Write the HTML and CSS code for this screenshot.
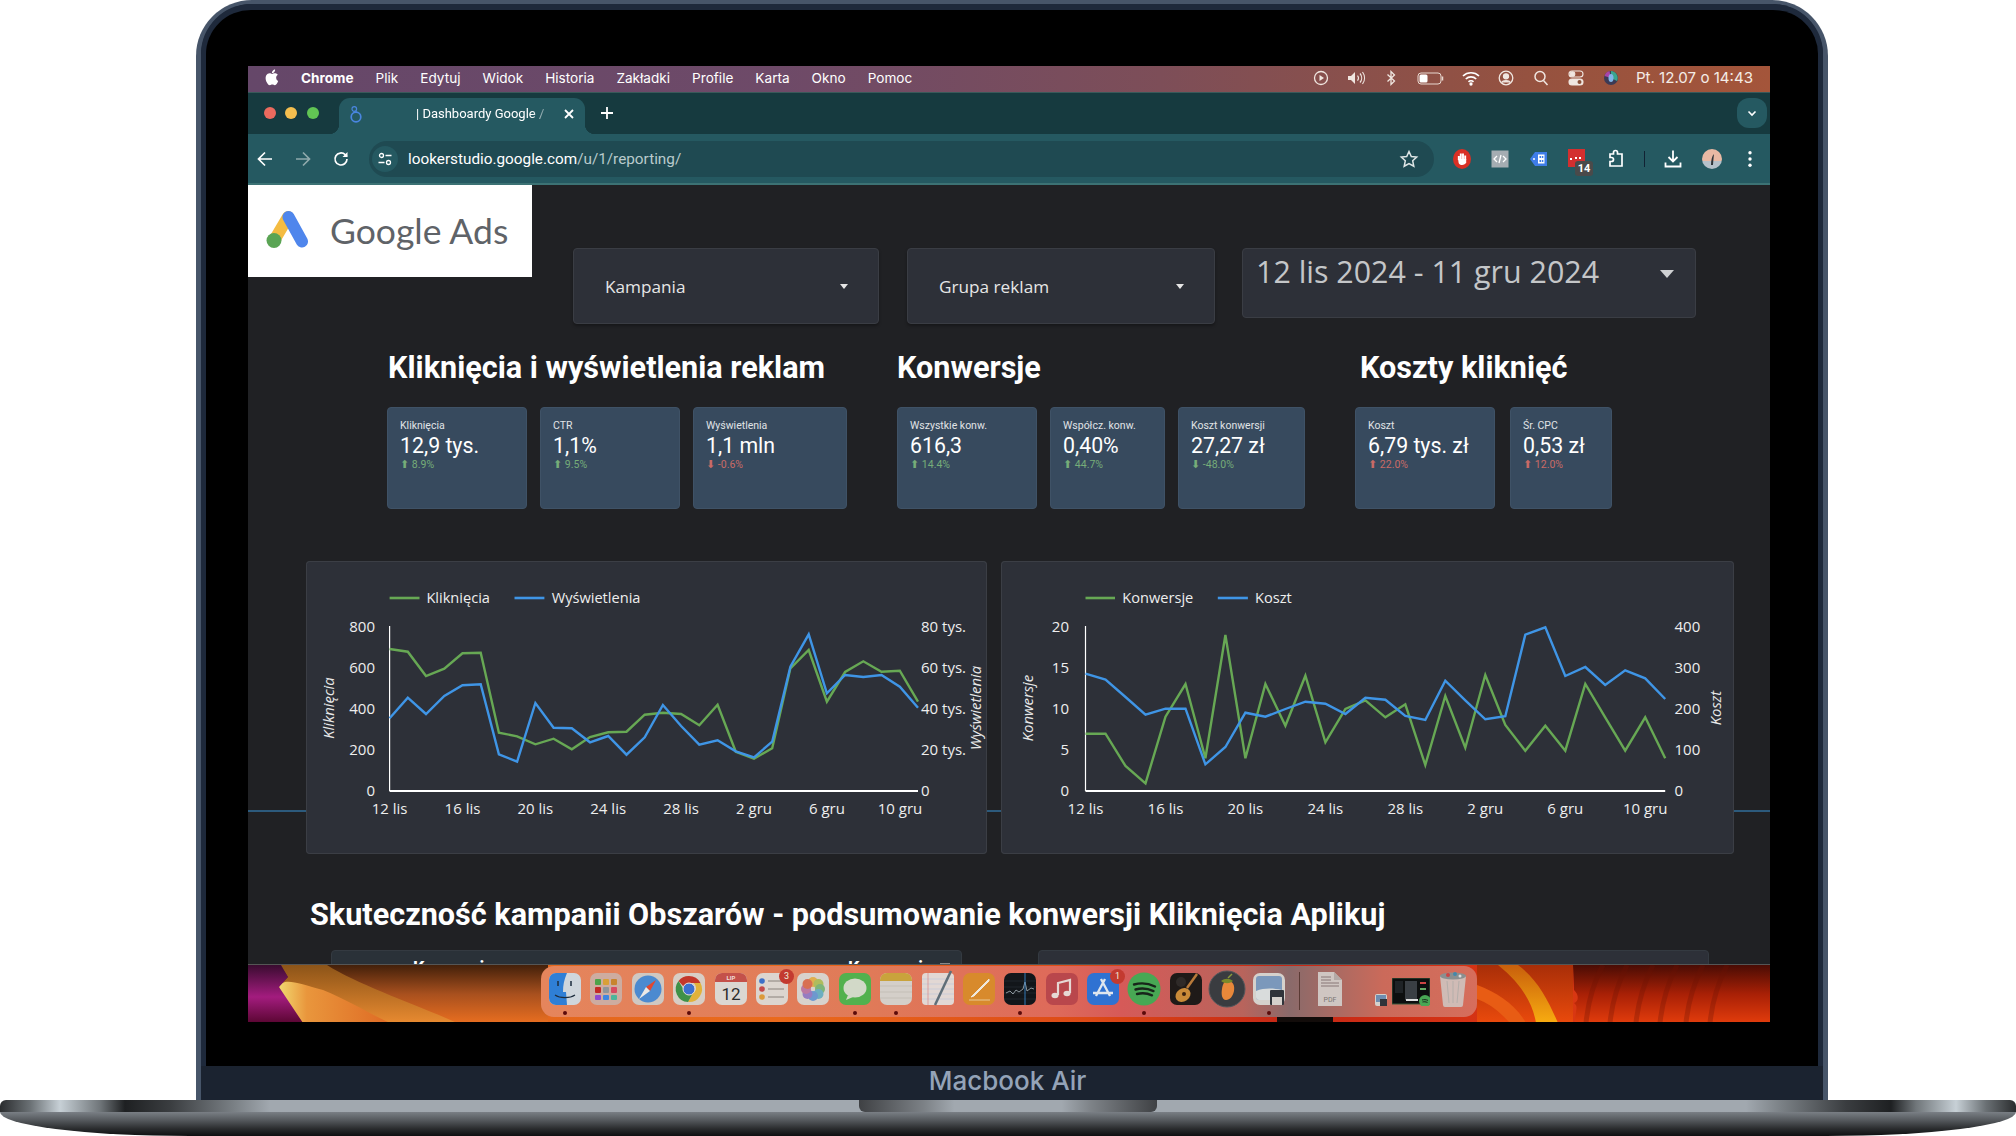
FILE: index.html
```html
<!DOCTYPE html>
<html lang="pl">
<head>
<meta charset="utf-8">
<title>Macbook Air - Dashboardy Google Ads</title>
<link rel="stylesheet" href="styles.css">
</head>
<body>
<div class="laptop">
  <div class="lid">
    <div class="bezel">
      <div class="screen">
        <div class="menubar">
          <svg class="apple" viewBox="0 0 16 18" width="16" height="18"><path fill="#fff" d="M12.2 9.600c0-1.900 1.600-2.800 1.600-2.800-.9-1.300-2.300-1.500-2.800-1.500-1.200-.1-2.300.7-2.900.7s-1.500-.7-2.500-.7C4.300 5.300 3 6.100 2.300 7.300c-1.400 2.400-.4 6 1 7.900.7 1 1.500 2 2.500 2s1.400-.6 2.500-.6 1.500.6 2.500.6 1.700-.9 2.300-1.900c.7-1.100 1-2.200 1-2.200s-2-.8-2-3.500zM10.300 4c.5-.6.9-1.500.8-2.400-.8 0-1.700.5-2.300 1.200-.5.6-1 1.500-.8 2.300.9.100 1.800-.4 2.300-1.100z"/></svg>
          <b class="menu-app">Chrome</b>
          <span>Plik</span><span>Edytuj</span><span>Widok</span><span>Historia</span><span>Zakładki</span><span>Profile</span><span>Karta</span><span>Okno</span><span>Pomoc</span>
          <div class="status">
            <svg viewBox="0 0 20 20" width="20" height="20" fill="none" stroke="#f0e6e0" stroke-width="1.300"><circle cx="10" cy="10" r="6.500"/><path d="M8.500 7v6l4.500-3z" fill="#f0e6e0" stroke="none"/></svg>
            <svg viewBox="0 0 20 20" width="20" height="20" fill="none" stroke="#f0e6e0" stroke-width="1.200"><path d="M2 8h3l4-4v12l-4-4H2z" fill="#f0e6e0" stroke="none"/><path d="M11.500 7.500a4 4 0 0 1 0 5M14 5.500a7 7 0 0 1 0 9M16.500 4a10 10 0 0 1 0 12"/></svg>
            <svg viewBox="0 0 20 20" width="20" height="20" fill="none" stroke="#f0e6e0" stroke-width="1.300"><path d="M6.500 6.500l7 6.500-3.500 3.500V3.500L13.500 7l-7 6.500"/></svg>
            <svg viewBox="0 0 30 20" width="30" height="20" fill="none"><rect x="2" y="5" width="23" height="11" rx="3" stroke="#e8d8d0" stroke-width="1"/><rect x="3.500" y="6.500" width="8" height="8" rx="1.500" fill="#fff"/><path d="M26.500 8.500v4" stroke="#e8d8d0" stroke-width="1.500"/></svg>
            <svg viewBox="0 0 20 20" width="20" height="20" fill="none" stroke="#fff" stroke-width="1.700"><path d="M2 8a11.500 11.500 0 0 1 16 0M4.800 11a7.500 7.500 0 0 1 10.400 0M7.500 13.800a3.500 3.500 0 0 1 5 0"/><circle cx="10" cy="16" r=".8" fill="#fff"/></svg>
            <svg viewBox="0 0 20 20" width="20" height="20" fill="none" stroke="#f0e6e0" stroke-width="1.300"><circle cx="10" cy="10" r="6.800"/><circle cx="10" cy="8.300" r="2.500" fill="#f0e6e0"/><path d="M5.500 14.500c1.500-2.500 7.500-2.500 9 0" fill="#f0e6e0"/></svg>
            <svg viewBox="0 0 20 20" width="20" height="20" fill="none" stroke="#f0e6e0" stroke-width="1.500"><circle cx="9" cy="8.500" r="5"/><path d="M12.500 12.500l4 4.500"/></svg>
            <svg viewBox="0 0 20 20" width="20" height="20" fill="none" stroke="#f0e6e0" stroke-width="1.100"><rect x="3" y="3" width="14" height="6" rx="3"/><circle cx="6.500" cy="6" r="2.300" fill="#f0e6e0"/><rect x="3" y="11" width="14" height="6" rx="3" fill="#f0e6e0"/><circle cx="13.500" cy="14" r="2" fill="#8a5038" stroke="none"/></svg>
            <svg viewBox="0 0 20 20" width="20" height="20"><circle cx="10" cy="10" r="7" fill="#3c3a55"/><path d="M10 3a7 7 0 0 1 6 10l-6-3z" fill="#3aa58e"/><path d="M3.500 8a7 7 0 0 1 5-5L10 10z" fill="#a844a8"/><ellipse cx="10" cy="10" rx="2.500" ry="4" fill="#7fb4e8"/></svg>
            <span class="clock">Pt. 12.07 o 14:43</span>
          </div>
        </div>

        <div class="tabstrip">
          <div class="lights"><i class="light red"></i><i class="light amber"></i><i class="light green"></i></div>
          <div class="tab">
            <svg class="favicon" viewBox="0 0 12 20" width="12" height="20" fill="none" stroke="#4a86e0" stroke-width="1.700"><circle cx="6" cy="13" r="4.800"/><circle cx="4.300" cy="5" r="2.300" stroke-width="1.200"/><path d="M5.500 7.500l1 1"/></svg>
            <span class="tab-title">| Dashboardy Google /</span>
            <svg class="tab-close" viewBox="0 0 12 12" width="12" height="12" stroke="#fff" stroke-width="1.800"><path d="M2 2l8 8M10 2l-8 8"/></svg>
          </div>
          <svg class="new-tab" viewBox="0 0 14 14" width="14" height="14" stroke="#fff" stroke-width="1.800"><path d="M7 1v12M1 7h12"/></svg>
          <div class="tab-search"><svg viewBox="0 0 12 12" width="12" height="12" fill="none" stroke="#fff" stroke-width="1.600"><path d="M2.500 4.500L6 8l3.500-3.500"/></svg></div>
        </div>

        <div class="toolbar">
          <svg viewBox="0 0 20 20" width="20" height="20" fill="none" stroke="#fff" stroke-width="1.700"><path d="M17 10H4M10 3.500L3.500 10l6.500 6.500"/></svg>
          <svg viewBox="0 0 20 20" width="20" height="20" fill="none" stroke="#8fa9ac" stroke-width="1.700"><path d="M3 10h13M10 3.500l6.500 6.500-6.500 6.500"/></svg>
          <svg viewBox="0 0 20 20" width="20" height="20" fill="none" stroke="#fff" stroke-width="1.700"><path d="M16 10a6 6 0 1 1-1.800-4.300L16 7.500"/><path d="M16.500 3v5h-5" fill="#fff" stroke="none"/></svg>
          <div class="omnibox">
            <span class="site-chip"><svg viewBox="0 0 16 16" width="16" height="16" fill="none" stroke="#fff" stroke-width="1.300"><circle cx="4.500" cy="4.500" r="2"/><path d="M8.500 4.500h6M1.500 11.500h6"/><circle cx="11.500" cy="11.500" r="2"/></svg></span>
            <span class="url">lookerstudio.google.com<em>/u/1/reporting/</em></span>
            <svg class="star" viewBox="0 0 20 20" width="20" height="20" fill="none" stroke="#dfe6e6" stroke-width="1.500"><path d="M10 2.500l2.300 5 5.400.6-4 3.700 1.100 5.400-4.800-2.700-4.800 2.700 1.100-5.400-4-3.700 5.400-.6z"/></svg>
          </div>
          <div class="extensions">
            <svg viewBox="0 0 20 20" width="20" height="20"><ellipse cx="10" cy="10" rx="9" ry="10" fill="#d93025"/><path d="M6.800 11V7M8.800 10V4.500M11 10V4.500M13.200 11V6.500" stroke="#fff" stroke-width="1.900"/><path d="M6 10h8.200v3.500c-1 3-6.500 3.500-7.500.5z" fill="#fff"/></svg>
            <svg viewBox="0 0 20 20" width="20" height="20"><rect x="1.500" y="1.500" width="17" height="17" fill="#a5adb2"/><path d="M7 7l-3 3 3 3M13 7l3 3-3 3M11 6l-2 8" stroke="#fff" stroke-width="1.300" fill="none"/></svg>
            <svg viewBox="0 0 20 20" width="20" height="20"><path d="M6 3h12v14H6L1 10z" fill="#3f7de8"/><rect x="9" y="5.500" width="6.500" height="9" fill="#fff"/><rect x="10.500" y="7" width="1.500" height="2" fill="#3f7de8"/><rect x="12.800" y="7" width="1.500" height="2" fill="#3f7de8"/><rect x="10.500" y="11" width="1.500" height="2" fill="#3f7de8"/><rect x="12.800" y="11" width="1.500" height="2" fill="#3f7de8"/><circle cx="5" cy="10" r="1" fill="#fff"/></svg>
            <div class="ext-badged"><svg viewBox="0 0 20 20" width="20" height="20"><rect x="1" y="0" width="17" height="18" fill="#d32f2f"/><path d="M3 10h2M8 9h2M12 9h2" stroke="#fff" stroke-width="2"/></svg><span class="ext-badge">14</span></div>
            <svg viewBox="0 0 20 20" width="20" height="20" fill="none" stroke="#fff" stroke-width="1.700"><path d="M4 5h3.500V3.500a2 2 0 0 1 4 0V5H16v12H4v-4.500h1.500a2 2 0 0 0 0-4H4z"/></svg>
            <i class="tool-sep"></i>
            <svg viewBox="0 0 20 20" width="20" height="20" fill="none" stroke="#fff" stroke-width="1.800"><path d="M10 1.500v11M5.500 8l4.500 4.500L14.500 8M2.500 13.500v4h15v-4"/></svg>
            <svg viewBox="0 0 20 20" width="20" height="20"><clipPath id="av"><circle cx="10" cy="10" r="10"/></clipPath><g clip-path="url(#av)"><rect width="20" height="12" fill="#e9b9a4"/><rect y="12" width="20" height="8" fill="#b5c1ca"/><path d="M9 16c0-5 1-9 3-11-.5 4-.8 8-1 11z" fill="#2e3338"/></g></svg>
            <svg viewBox="0 0 20 20" width="20" height="20" fill="#fff"><circle cx="10" cy="3.800" r="1.700"/><circle cx="10" cy="10" r="1.700"/><circle cx="10" cy="16.200" r="1.700"/></svg>
          </div>
        </div>

        <div class="page">
          <div class="controls">
            <div class="logo">
              <svg class="logo-mark" viewBox="0 0 44 38" width="44" height="38"><path d="M22 7L9 29" stroke="#f4bc42" stroke-width="12" stroke-linecap="round"/><path d="M22.500 7L36 31.500" stroke="#4f86ec" stroke-width="12" stroke-linecap="round"/><circle cx="8" cy="30.500" r="7.500" fill="#5aa454"/></svg>
              <span class="logo-text">Google Ads</span>
            </div>
            <div class="filter filter-campaign"><span>Kampania</span><i class="caret"></i></div>
            <div class="filter filter-group"><span>Grupa reklam</span><i class="caret"></i></div>
            <div class="date-filter"><span>12 lis 2024 - 11 gru 2024</span><i class="caret-big"></i></div>
          </div>

          <div class="groups">
            <section class="group">
              <h2 class="group-title title-a">Kliknięcia i wyświetlenia reklam</h2>
              <div class="kpis">
                <div class="kpi w140"><p class="kpi-label">Kliknięcia</p><p class="kpi-value">12,9 tys.</p><p class="kpi-delta good"><b>⬆</b> 8.9%</p></div>
                <div class="kpi w140"><p class="kpi-label">CTR</p><p class="kpi-value">1,1%</p><p class="kpi-delta good"><b>⬆</b> 9.5%</p></div>
                <div class="kpi w154"><p class="kpi-label">Wyświetlenia</p><p class="kpi-value">1,1 mln</p><p class="kpi-delta bad"><b>⬇</b> -0.6%</p></div>
              </div>
            </section>
            <section class="group">
              <h2 class="group-title">Konwersje</h2>
              <div class="kpis">
                <div class="kpi w140"><p class="kpi-label">Wszystkie konw.</p><p class="kpi-value">616,3</p><p class="kpi-delta good"><b>⬆</b> 14.4%</p></div>
                <div class="kpi w115"><p class="kpi-label">Współcz. konw.</p><p class="kpi-value">0,40%</p><p class="kpi-delta good"><b>⬆</b> 44.7%</p></div>
                <div class="kpi w127"><p class="kpi-label">Koszt konwersji</p><p class="kpi-value">27,27 zł</p><p class="kpi-delta good"><b>⬇</b> -48.0%</p></div>
              </div>
            </section>
            <section class="group">
              <h2 class="group-title title-c">Koszty kliknięć</h2>
              <div class="kpis kpis-wide">
                <div class="kpi w140"><p class="kpi-label">Koszt</p><p class="kpi-value">6,79 tys. zł</p><p class="kpi-delta bad"><b>⬆</b> 22.0%</p></div>
                <div class="kpi w102"><p class="kpi-label">Śr. CPC</p><p class="kpi-value">0,53 zł</p><p class="kpi-delta bad"><b>⬆</b> 12.0%</p></div>
              </div>
            </section>
          </div>

          <div class="charts">
            <div class="chart chart-a">
              <svg viewBox="0 0 681 293" width="681" height="293">
                <line class="legend-g" x1="83.600" y1="37" x2="113.500" y2="37"/><text class="legend" x="120.400" y="42">Kliknięcia</text>
                <line class="legend-b" x1="208.500" y1="37" x2="238.400" y2="37"/><text class="legend" x="245.700" y="42">Wyświetlenia</text>
                <path class="axis" d="M83.600 65V230"/><path class="axis-x" d="M83.600 230H612"/>
                <g class="tick end"><text x="69" y="71">800</text><text x="69" y="112">600</text><text x="69" y="153">400</text><text x="69" y="194">200</text><text x="69" y="235">0</text></g>
                <g class="tick"><text x="615" y="71">80 tys.</text><text x="615" y="112">60 tys.</text><text x="615" y="153">40 tys.</text><text x="615" y="194">20 tys.</text><text x="615" y="235">0</text></g>
                <g class="tick mid"><text x="83.600" y="253">12 lis</text><text x="156.500" y="253">16 lis</text><text x="229.400" y="253">20 lis</text><text x="302.200" y="253">24 lis</text><text x="375.100" y="253">28 lis</text><text x="448" y="253">2 gru</text><text x="520.900" y="253">6 gru</text><text x="594" y="253">10 gru</text></g>
                <text class="axis-title" transform="translate(28 147) rotate(-90)">Kliknięcia</text>
                <text class="axis-title" transform="translate(675 147) rotate(-90)">Wyświetlenia</text>
                <polyline class="line-g" points="83.600,88 101.800,90.700 120,115 138.300,107.700 156.500,92.300 174.700,91.700 192.900,171.700 211.100,175.300 229.400,183.300 247.600,177.700 265.800,188.300 284,176 302.200,171.300 320.500,170.700 338.700,153.700 356.900,151.700 375.100,153 393.300,164.300 411.600,143.700 429.800,190.700 448,197.700 466.200,187.300 484.400,107.300 502.700,89 520.900,140.700 539.100,111 557.300,100.300 575.500,110.700 593.800,109.700 612,140.700"/>
                <polyline class="line-b" points="83.600,157.300 101.800,136.700 120,153 138.300,135 156.500,124.300 174.700,123.300 192.900,193.300 211.100,200.700 229.400,142 247.600,166.700 265.800,167.300 284,181.300 302.200,175 320.500,193.700 338.700,176.300 356.900,144 375.100,165 393.300,183.700 411.600,179.300 429.800,190.300 448,196.300 466.200,180.700 484.400,105.700 502.700,73.300 520.900,132.300 539.100,114 557.300,116 575.500,114 593.800,125.700 612,146.700"/>
              </svg>
            </div>
            <div class="chart chart-b">
              <svg viewBox="0 0 733 293" width="733" height="293">
                <line class="legend-g" x1="84.500" y1="37" x2="114" y2="37"/><text class="legend" x="121.300" y="42">Konwersje</text>
                <line class="legend-b" x1="216.800" y1="37" x2="246.900" y2="37"/><text class="legend" x="254" y="42">Koszt</text>
                <path class="axis" d="M84.500 65V230"/><path class="axis-x" d="M84.500 230H664.200"/>
                <g class="tick end"><text x="68" y="71">20</text><text x="68" y="112">15</text><text x="68" y="153">10</text><text x="68" y="194">5</text><text x="68" y="235">0</text></g>
                <g class="tick"><text x="673.500" y="71">400</text><text x="673.500" y="112">300</text><text x="673.500" y="153">200</text><text x="673.500" y="194">100</text><text x="673.500" y="235">0</text></g>
                <g class="tick mid"><text x="84.500" y="253">12 lis</text><text x="164.500" y="253">16 lis</text><text x="244.400" y="253">20 lis</text><text x="324.400" y="253">24 lis</text><text x="404.300" y="253">28 lis</text><text x="484.300" y="253">2 gru</text><text x="564.300" y="253">6 gru</text><text x="644.200" y="253">10 gru</text></g>
                <text class="axis-title" transform="translate(32 147) rotate(-90)">Konwersje</text>
                <text class="axis-title" transform="translate(720 147) rotate(-90)">Koszt</text>
                <polyline class="line-g" points="84.500,172.700 104.500,172.700 124.500,205 144.500,222.300 164.500,155.700 184.500,123 204.400,197.300 224.400,74 244.400,197.300 264.400,123 284.400,164.700 304.400,114.700 324.400,181.300 344.400,148 364.400,139.300 384.400,156.300 404.300,143.300 424.300,204 444.300,135 464.300,186.700 484.300,114 504.300,164 524.300,189.700 544.300,164.700 564.300,189.700 584.300,123 604.200,156.300 624.200,189.700 644.200,156.300 664.200,197.300"/>
                <polyline class="line-b" points="84.500,112.700 104.500,118.700 124.500,136 144.500,153.700 164.500,147.700 184.500,147.700 204.400,203.300 224.400,186 244.400,151.700 264.400,155.700 284.400,148 304.400,140.700 324.400,142.700 344.400,153 364.400,136.700 384.400,138.700 404.300,155 424.300,159 444.300,119.700 464.300,139.300 484.300,158.300 504.300,155.300 524.300,73.700 544.300,66.300 564.300,115 584.300,106 604.200,124 624.200,109.300 644.200,117.300 664.200,138"/>
              </svg>
            </div>
          </div>

          <h2 class="section-title">Skuteczność kampanii Obszarów - podsumowanie konwersji Kliknięcia Aplikuj</h2>

          <div class="tables">
            <div class="table table-a"><span class="th th-name">Kampania</span><span class="th th-conv">Konwersje</span><i class="sort"></i></div>
            <div class="table table-b"></div>
          </div>
        </div>

        <div class="desktop">
          <svg class="wallpaper" viewBox="0 0 1522 58" width="1522" height="58" preserveAspectRatio="none">
            <defs>
              <linearGradient id="wpBase" x1="0" x2="1" y1="0" y2="0"><stop offset="0" stop-color="#dc641e"/><stop offset=".35" stop-color="#ea6a1c"/><stop offset=".55" stop-color="#dd4a16"/><stop offset=".68" stop-color="#c62816"/><stop offset=".8" stop-color="#d43214"/><stop offset="1" stop-color="#e0400f"/></linearGradient>
              <linearGradient id="wpMag" x1="0" x2="0" y1="0" y2="1"><stop offset="0" stop-color="#3a0c30"/><stop offset=".55" stop-color="#a31c7e"/><stop offset="1" stop-color="#5a0632"/></linearGradient>
              <linearGradient id="wpDark" x1="0" x2="0" y1="0" y2="1"><stop offset="0" stop-color="#43200a"/><stop offset=".5" stop-color="#a8501e"/><stop offset="1" stop-color="#e86e20"/></linearGradient>
              <linearGradient id="wpBand" x1="0" x2="0" y1="0" y2="1"><stop offset="0" stop-color="#8c5418"/><stop offset="1" stop-color="#e88a30"/></linearGradient>
              <linearGradient id="wpBlob" x1="0" x2="1" y1="0" y2="0"><stop offset="0" stop-color="#f2d870"/><stop offset=".25" stop-color="#e9963c"/><stop offset="1" stop-color="#df6a24"/></linearGradient>
              <linearGradient id="wpRayA" x1="0" x2="0" y1="0" y2="1"><stop offset="0" stop-color="#a82e08"/><stop offset="1" stop-color="#ea4a0c"/></linearGradient>
              <linearGradient id="wpRayY" x1="0" x2="0" y1="0" y2="1"><stop offset="0" stop-color="#c85f0c"/><stop offset="1" stop-color="#f8ac10"/></linearGradient>
              <linearGradient id="wpEdge" x1="0" x2="0" y1="0" y2="1"><stop offset="0" stop-color="#4a0c04"/><stop offset=".5" stop-color="#a82006"/><stop offset="1" stop-color="#e23c0c"/></linearGradient>
            </defs>
            <rect width="1522" height="58" fill="url(#wpBase)"/>
            <rect x="32" width="268" height="58" fill="url(#wpDark)"/>
            <path d="M32 0H79C110 20 170 40 209 58H55L31 22 40 12z" fill="url(#wpBand)"/>
            <path d="M31 22C35 12 50 18 75 25 100 35 120 48 142 58H55C45 45 32 32 31 22z" fill="url(#wpBlob)"/>
            <path d="M0 0H33L40 12 31 22 55 58H0z" fill="url(#wpMag)"/>
            <path d="M1029 46H1085V58H1029z" fill="#120c0a"/>
            <rect x="1229" width="96" height="58" fill="url(#wpRayA)"/>
            <path d="M1229 20C1250 28 1268 40 1278 58H1262C1250 45 1240 38 1229 34z" fill="#e85c14"/>
            <path d="M1250 0C1275 20 1285 40 1288 58H1310C1300 35 1290 15 1270 0z" fill="url(#wpRayY)"/>
            <path d="M1325 0H1522V58H1327C1327 45 1331 42 1326 38 1331 36 1331 30 1326 25z" fill="url(#wpEdge)"/>
            <g fill="none" stroke="#6a1204" stroke-width="5" opacity=".3">
              <path d="M1355 0C1345 18 1340 38 1338 58"/><path d="M1379 0C1370 18 1364 38 1362 58"/><path d="M1405 0C1396 18 1390 38 1388 58"/><path d="M1429 0C1420 18 1414 38 1412 58"/><path d="M1455 0C1446 18 1440 38 1438 58"/><path d="M1479 0C1470 18 1464 38 1462 58"/>
            </g>
          </svg>
          <div class="dock">
            <div class="dock-apps">
              <div class="app run"><svg viewBox="0 0 32 32" width="32" height="32"><rect width="32" height="32" rx="7" fill="#cfd6dc"/><path d="M7 0h11c-3 7-4 12-4 19h3l1 13H7a7 7 0 0 1-7-7V7a7 7 0 0 1 7-7z" fill="#2f7fd6"/><path d="M9 8v5M22 8v5" stroke="#1d2c3c" stroke-width="1.500"/><path d="M6 22c5 3.500 15 3.500 20 0" stroke="#1d2c3c" stroke-width="1.200" fill="none"/></svg></div>
              <div class="app"><svg viewBox="0 0 32 32" width="32" height="32"><rect width="32" height="32" rx="7" fill="#cdaca0"/><rect x="5" y="6" width="6" height="6" rx="1" fill="#4ea34a"/><rect x="13" y="6" width="6" height="6" rx="1" fill="#d9a038"/><rect x="21" y="6" width="6" height="6" rx="1" fill="#c8842e"/><rect x="5" y="14" width="6" height="6" rx="1" fill="#c22a26"/><rect x="13" y="14" width="6" height="6" rx="1" fill="#8f9599"/><rect x="21" y="14" width="6" height="6" rx="1" fill="#d84a60"/><rect x="5" y="22" width="6" height="5" rx="1" fill="#8f4ad0"/><rect x="13" y="22" width="6" height="5" rx="1" fill="#3d86e0"/><rect x="21" y="22" width="6" height="5" rx="1" fill="#4cb59a"/></svg></div>
              <div class="app"><svg viewBox="0 0 32 32" width="32" height="32"><rect width="32" height="32" rx="7" fill="#cfc8c2"/><circle cx="16" cy="16" r="13.500" fill="#4b8ad0"/><path d="M24 7L14 14l4 4z" fill="#e2472f"/><path d="M7 26l7-12 4 4z" fill="#eceae6"/></svg></div>
              <div class="app run"><svg viewBox="0 0 32 32" width="32" height="32"><rect width="32" height="32" rx="7" fill="#d8cec5"/><path d="M16 3a13 13 0 0 1 11.500 7H16a6 6 0 0 0-5.500 3.500L5.500 8A13 13 0 0 1 16 3z" fill="#c4372a"/><path d="M27.500 10A13 13 0 0 1 15 29l5-9a6 6 0 0 0 .5-10z" fill="#e2b23a"/><path d="M5.500 8l5.500 9a6 6 0 0 0 9 3l-5 9A13 13 0 0 1 5.500 8z" fill="#3f9148"/><circle cx="16" cy="16" r="6" fill="#3d70d0" stroke="#e8e0d8" stroke-width="1"/></svg></div>
              <div class="app"><svg viewBox="0 0 32 32" width="32" height="32"><rect width="32" height="32" rx="7" fill="#dbd7d2"/><path d="M0 9V7a7 7 0 0 1 7-7h18a7 7 0 0 1 7 7v2z" fill="#c4514a"/><text class="cal-month" x="16" y="7.200">LIP</text><text class="cal-day" x="16" y="27">12</text></svg></div>
              <div class="app"><svg viewBox="0 0 32 32" width="32" height="32"><rect width="32" height="32" rx="7" fill="#dcd5cf"/><circle cx="6" cy="8" r="2.800" fill="#3d70c8"/><circle cx="6" cy="16" r="2.800" fill="#c44a4a"/><circle cx="6" cy="24" r="2.800" fill="#dc9a3a"/><path d="M12 8h16M12 16h16M12 24h16" stroke="#8a827c" stroke-width="1"/></svg><span class="badge">3</span></div>
              <div class="app"><svg viewBox="0 0 32 32" width="32" height="32"><rect width="32" height="32" rx="7" fill="#d8d2cc"/><g opacity=".85"><circle cx="16" cy="9" r="5" fill="#e2a83a"/><circle cx="21.500" cy="11" r="5" fill="#a8b94a"/><circle cx="23" cy="16" r="5" fill="#6fb06a"/><circle cx="21.500" cy="21" r="5" fill="#5aa8c0"/><circle cx="16" cy="23" r="5" fill="#5b8ed0"/><circle cx="10.500" cy="21" r="5" fill="#8b6ec0"/><circle cx="9" cy="16" r="5" fill="#b86a9c"/><circle cx="10.500" cy="11" r="5" fill="#d8603e"/></g></svg></div>
              <div class="app run"><svg viewBox="0 0 32 32" width="32" height="32"><rect width="32" height="32" rx="7" fill="#52b14e"/><ellipse cx="16" cy="15" rx="11.500" ry="9.500" fill="#d2d9c8"/><path d="M9 22l-2 5 7-3z" fill="#d2d9c8"/></svg></div>
              <div class="app run"><svg viewBox="0 0 32 32" width="32" height="32"><rect width="32" height="32" rx="7" fill="#d4cfc9"/><path d="M0 8V7a7 7 0 0 1 7-7h18a7 7 0 0 1 7 7v1z" fill="#c9a33c"/><path d="M0 13h32M0 19h32M0 25h32" stroke="#bdb7b0" stroke-width=".7"/></svg></div>
              <div class="app"><svg viewBox="0 0 32 32" width="32" height="32"><rect width="32" height="32" rx="4" fill="#e2d8d4"/><path d="M0 6h32M0 11h32M0 16h32M0 21h32M0 26h32" stroke="#c0c8d8" stroke-width=".7"/><path d="M6 0v32" stroke="#d87a7a" stroke-width=".6"/><path d="M29-2L13 32" stroke="#5f6e78" stroke-width="2.500"/></svg></div>
              <div class="app"><svg viewBox="0 0 32 32" width="32" height="32"><rect width="32" height="32" rx="7" fill="#d88a2c"/><path d="M26 6L11 21l-3 3 3-1 15-15z" fill="#efe8dc" stroke="#efe8dc"/><path d="M6 27h21" stroke="#efd8b0" stroke-width=".8"/></svg></div>
              <div class="app run"><svg viewBox="0 0 32 32" width="32" height="32"><rect width="32" height="32" rx="7" fill="#12161a"/><path d="M0 8h32M0 14h32M0 20h32M0 26h32" stroke="#2a3138" stroke-width=".6"/><path d="M2 20l4-2 3 3 3-4 3 2 4-3 2-7 2 9 4-3 3 1" fill="none" stroke="#9aa5ac" stroke-width=".9"/><path d="M21 0v32" stroke="#3584c8" stroke-width=".9"/></svg></div>
              <div class="app"><svg viewBox="0 0 32 32" width="32" height="32"><rect width="32" height="32" rx="7" fill="#b9474c"/><path d="M12 22V10l12-3v13" fill="none" stroke="#e6d8d4" stroke-width="2.200"/><ellipse cx="9" cy="22.500" rx="3.500" ry="2.800" fill="#e6d8d4"/><ellipse cx="21" cy="20.500" rx="3.500" ry="2.800" fill="#e6d8d4"/></svg></div>
              <div class="app"><svg viewBox="0 0 32 32" width="32" height="32"><rect width="32" height="32" rx="7" fill="#2f72d2"/><path d="M18 6L9 23M14 6l9 17M6 20h20" stroke="#dfe6ee" stroke-width="2.300" fill="none"/></svg><span class="badge">1</span></div>
              <div class="app run"><svg viewBox="0 0 32 32" width="32" height="32"><circle cx="16" cy="16" r="16.500" fill="#48a854"/><path d="M6 11.500c7-2 14-1.500 21 2M7.500 16.500c6-1.600 12-1.200 18 1.600M9 21c5-1.300 10-1 15 1.300" fill="none" stroke="#17251a" stroke-width="2.400" stroke-linecap="round"/></svg></div>
              <div class="app"><svg viewBox="0 0 32 32" width="32" height="32"><rect width="32" height="32" rx="7" fill="#1f1a18"/><circle cx="11" cy="9" r="5" fill="#2f2a28"/><path d="M27 1L17 15" stroke="#b87a3a" stroke-width="2.500"/><ellipse cx="13" cy="22" rx="8" ry="6.500" fill="#c98a38" transform="rotate(-35 13 22)"/><circle cx="14" cy="21" r="2" fill="#3a2210"/></svg></div>
              <div class="app"><svg viewBox="0 0 32 32" width="32" height="32"><circle cx="16" cy="16" r="18" fill="#3a3c40" stroke="#55585c" stroke-width="1"/><path d="M16 8c6 0 8 4 7 10-1 5-4 9-8 9-4 0-5-6-4-11 .6-4 2-8 5-8z" fill="#e8883a"/><path d="M10 8c4-3 8-3 12 0-4 3-8 3-12 0z" fill="#7a8a2a"/><path d="M17 5l4-4" stroke="#8a9a3a" stroke-width="1.500"/></svg></div>
              <div class="app run"><svg viewBox="0 0 32 32" width="32" height="32"><rect width="32" height="32" rx="7" fill="#d5d1cc"/><rect x="3" y="3" width="26" height="24" rx="3" fill="#7b98bb"/><path d="M3 18c8-3 16-3 26-1v7a3 3 0 0 1-3 3H6a3 3 0 0 1-3-3z" fill="#d9dcdc"/><rect x="17" y="17" width="14" height="15" rx="1" fill="#30343a"/><rect x="19" y="24" width="10" height="8" fill="#d5d1cc"/></svg></div>
            </div>
            <i class="dock-sep"></i>
            <div class="dock-files">
              <svg class="doc-pdf" viewBox="0 0 26 36" width="26" height="36"><path d="M1 1h16l8 8v26H1z" fill="#cfc6c2"/><path d="M17 1v8h8z" fill="#b3a9a6"/><path d="M4 6h10M4 9h10M4 12h18M4 15h18" stroke="#877" stroke-width="1"/><text class="pdf-label" x="13" y="31">PDF</text></svg>
              <svg class="thumb" viewBox="0 0 12 12" width="12" height="12"><rect width="12" height="12" rx="2" fill="#d5d1cc"/><rect x="1" y="1" width="10" height="7" fill="#6f8db0"/><rect x="5" y="5" width="7" height="7" fill="#30343a"/></svg>
              <svg class="shot" viewBox="0 0 38 28" width="38" height="28"><rect width="38" height="26" fill="#0d0f0f" stroke="#3c5a3c"/><rect x="13" y="3" width="12" height="19" fill="#3a3f44"/><rect x="3" y="3" width="8" height="12" fill="#1f2326"/><rect x="28" y="4" width="6" height="2" fill="#c44"/><rect x="28" y="10" width="6" height="2" fill="#6a6"/><rect x="14" y="21" width="12" height="2" fill="#ddd"/><circle cx="33" cy="23" r="6" fill="#48a854"/><path d="M30 22c2-.6 4-.5 6 .4M30.500 24c1.600-.4 3-.3 5 .4" stroke="#17251a" fill="none"/></svg>
              <svg class="trash" viewBox="0 0 28 36" width="28" height="36"><path d="M1 5h26l-3 29a2 2 0 0 1-2 2H6a2 2 0 0 1-2-2z" fill="#cfc9c6" opacity=".85"/><ellipse cx="14" cy="5" rx="13" ry="3.500" fill="#8a8f90"/><circle cx="9" cy="4" r="2" fill="#c44"/><circle cx="16" cy="3" r="2" fill="#48a"/><circle cx="21" cy="5" r="1.500" fill="#ddd"/><path d="M8 10l2 22M14 10v22M20 10l-2 22" stroke="#b5aeaa"/></svg>
            </div>
          </div>
        </div>
      </div>
    </div>
    <div class="chin">Macbook Air</div>
  </div>
  <div class="base">
    <div class="deck"><div class="notch"></div></div>
    <div class="foot"></div>
  </div>
</div>
</body>
</html>
```
FILE: styles.css
```css
* { box-sizing: border-box; }
html, body { margin: 0; padding: 0; }
body { width: 2016px; height: 1136px; overflow: hidden; background: #fff; font-family: "Roboto", "Liberation Sans", sans-serif; }
p, h2 { margin: 0; }

.laptop { display: flex; flex-direction: column; width: 2016px; height: 1136px; }
.lid { display: flex; flex-direction: column; width: 1632px; height: 1100px; margin-left: 196px; background: #1b2330; border: solid #475569; border-width: 4px 5px 0; border-radius: 56px 56px 0 0; }
.bezel { flex: none; height: 1062px; padding: 56px 47px 44px 42px; background: #000; border: solid #1e293b; border-width: 6px 5px 0; border-radius: 50px 50px 0 0; }
.chin { display: flex; flex: none; height: 34px; align-items: center; justify-content: center; padding: 0 9px 5px 0; color: #94a3b8; font: 500 26px "Inter", "Liberation Sans", sans-serif; }

.screen { display: flex; flex-direction: column; width: 1522px; height: 956px; overflow: hidden; }

/* menu bar */
.menubar { display: flex; flex: none; height: 26px; align-items: center; gap: 22px; padding: 0 17px 3px 16px; color: #fff; font: 13.600px "Inter", "Liberation Sans", sans-serif; background: linear-gradient(90deg, #654769 0%, #6e4a68 35%, #7d4e58 60%, #96523f 85%, #a4553a 100%); }
.apple { flex: none; margin-right: -1px; margin-top: -2px; }
.menu-app { font-weight: 700; }
.status { display: flex; align-items: center; gap: 15px; margin-left: auto; color: #f4ece6; }
.status svg { flex: none; }
.clock { font-size: 15.100px; white-space: nowrap; }

/* tab strip */
.tabstrip { position: relative; display: flex; flex: none; height: 42px; align-items: flex-end; background: #163a3f; border-top: 1px solid #39595a; }
.lights { display: flex; gap: 9.500px; align-self: center; width: 91px; margin-top: -2px; padding-left: 15.500px; }
.light { width: 12px; height: 12px; border-radius: 50%; }
.red { background: #ec6a5e; }
.amber { background: #f5bf4f; }
.green { background: #61c554; }
.tab { position: relative; display: flex; width: 246px; height: 36px; align-items: center; padding: 0 0 5px 11px; background: #255961; border-radius: 11px 11px 0 0; color: #fff; font: 13px "Roboto", sans-serif; }
.tab::before, .tab::after { content: ""; position: absolute; bottom: 0; width: 10px; height: 10px; }
.tab::before { left: -10px; background: radial-gradient(circle at 0 0, #163a3f 10px, #255961 10.500px); }
.tab::after { right: -10px; background: radial-gradient(circle at 100% 0, #163a3f 10px, #255961 10.500px); }
.favicon { flex: none; margin-right: 54px; }
.tab-title { width: 136px; white-space: nowrap; -webkit-mask-image: linear-gradient(90deg, #000 85%, transparent 100%); mask-image: linear-gradient(90deg, #000 85%, transparent 100%); }
.tab-close { flex: none; margin-left: 11px; }
.new-tab { flex: none; align-self: center; margin: -2px 0 0 15px; }
.tab-search { display: flex; align-self: center; width: 30px; height: 30px; align-items: center; justify-content: center; margin: -2px 3px 0 auto; background: #255961; border-radius: 12px; }

/* toolbar */
.toolbar { display: flex; flex: none; height: 51px; align-items: center; gap: 18px; padding-left: 7px; background: #255961; border-bottom: 2px solid #3c7274; }
.toolbar svg { flex: none; }
.omnibox { display: flex; width: 1065px; height: 36px; align-items: center; background: #1f4a52; border-radius: 18px; color: #fff; font: 15.300px "Roboto", sans-serif; }
.site-chip { display: flex; width: 26px; height: 26px; align-items: center; justify-content: center; margin: 0 10px 0 3px; background: #255961; border-radius: 50%; }
.url { white-space: nowrap; }
.url em { color: #b9cacc; font-style: normal; }
.star { margin-left: auto; margin-right: 15px; }
.extensions { display: flex; align-items: center; gap: 18.600px; margin-left: -0.400px; }
.ext-badged { position: relative; width: 20px; height: 20px; }
.ext-badge { position: absolute; right: -6px; bottom: -7px; padding: 0 3px; background: #4a4a4a; border-radius: 3px; color: #fff; font: 700 11px/15px "Roboto", sans-serif; }
.tool-sep { width: 1px; height: 16px; margin: 0 -0.500px; background: #123; }

/* dashboard */
.page { flex: none; height: 779px; overflow: hidden; color: #fff; background: #202124 linear-gradient(#2c5a7c, #2c5a7c) 0 625px / 100% 2px no-repeat; }
.controls { display: flex; height: 139px; align-items: flex-start; }
.logo { display: flex; flex: none; width: 284px; height: 92px; align-items: center; gap: 20px; padding-left: 18px; background: #fff; }
.logo-mark { margin-top: -5px; }
.logo-text { color: #5f6368; font: 35.500px/1 "Lato", sans-serif; white-space: nowrap; }
.filter, .date-filter { display: flex; flex: none; margin-top: 63px; background: #2d3038; border: 1px solid #3a3d44; border-radius: 4px; }
.filter { height: 76px; align-items: center; justify-content: space-between; padding: 0 30px 0 31px; color: #e6e6e6; font: 17.200px "Open Sans", sans-serif; box-shadow: 0 2px 3px rgba(0, 0, 0, .3); }
.filter-campaign { width: 306px; margin-left: 41px; }
.filter-group { width: 308px; margin-left: 28px; }
.caret { width: 0; height: 0; border: solid transparent; border-width: 5px 4px 0; border-top-color: #e6e6e6; }
.date-filter { width: 454px; height: 70px; margin-left: 27px; padding: 2px 21px 0 13px; justify-content: space-between; color: #c4c6c8; font: 30.400px/42px "Open Sans", sans-serif; }
.caret-big { width: 0; height: 0; margin-top: 19px; border: solid transparent; border-width: 8px 7.500px 0; border-top-color: #cfd1d3; }

.groups { display: flex; gap: 50px; margin-top: 23px; padding-left: 139px; }
.group { flex: none; }
.group-title { height: 40px; margin-bottom: 20px; padding-top: 1px; color: #fff; font: 700 30.600px/40px "Roboto", sans-serif; white-space: nowrap; }
.title-a { padding-left: 1px; }
.title-c { padding-left: 5px; }
.kpis { display: flex; gap: 13px; }
.kpis-wide { gap: 15px; }
.kpi { height: 102px; padding: 11px 0 0 12px; background: #374a5e; border: 1px solid #3f5266; border-radius: 4px; color: #fff; }
.w140 { width: 140px; }
.w154 { width: 154px; }
.w115 { width: 115px; }
.w127 { width: 127px; }
.w102 { width: 102px; }
.kpi-label { color: #e0e3e6; font: 10.500px/14px "Roboto", sans-serif; white-space: nowrap; }
.kpi-value { color: #fff; font: 400 21.300px/25px "Roboto", sans-serif; white-space: nowrap; }
.kpi-delta { font: 10.500px/14px "Roboto", sans-serif; white-space: nowrap; }
.kpi-delta b { font: 11px/14px "DejaVu Sans", sans-serif; }
.good { color: #76ad79; }
.bad { color: #c96a66; }

.charts { display: flex; gap: 14px; margin-top: 52px; padding-left: 57.500px; }
.chart { flex: none; height: 293px; background: #2d3038; border-radius: 4px; box-shadow: inset 0 0 0 1px #3b3e45; }
.chart svg { display: block; }
.chart-a { width: 681.500px; }
.chart-b { width: 733px; }
.legend { fill: #eee; font: 14.600px "Open Sans", sans-serif; }
.tick { fill: #eee; font: 15px "Open Sans", sans-serif; }
.end { text-anchor: end; }
.mid { text-anchor: middle; }
.axis-title { fill: #e8e8e8; font: italic 14.800px "Open Sans", sans-serif; text-anchor: middle; }
.axis { stroke: #fff; stroke-width: 1.200; fill: none; }
.axis-x { stroke: #fff; stroke-width: 2; fill: none; }
.line-g, .line-b { fill: none; stroke-width: 2.400; stroke-linejoin: miter; }
.line-g, .legend-g { stroke: #67a854; }
.line-b, .legend-b { stroke: #3f95e6; }
.legend-g, .legend-b { stroke-width: 2.600; }

.section-title { height: 40px; margin-top: 40px; padding: 1px 0 0 62px; color: #fff; font: 700 30.600px/40px "Roboto", sans-serif; white-space: nowrap; }
.tables { display: flex; gap: 76px; margin-top: 16px; padding-left: 83px; }
.table { position: relative; height: 30px; background: #2a3138; border: 1px solid #343a41; border-radius: 4px; }
.table-a { display: flex; width: 631px; padding: 7px 0 0 81px; color: #fff; font: 700 18px/20px "Roboto", sans-serif; }
.table-b { width: 671px; background: #2d3038; }
.th-conv { margin-left: 354px; }
.sort { position: absolute; left: 608px; top: 12px; width: 10px; height: 2px; background: #888; }

/* desktop and dock */
.desktop { position: relative; flex: none; height: 58px; overflow: hidden; background: #d9661e; border-top: 1px solid #555; }
.wallpaper { position: absolute; left: 0; top: 0; display: block; }
.dock { position: absolute; left: 293px; top: 1px; display: flex; width: 936px; height: 51px; align-items: flex-start; padding: 7px 0 0 8px; border-radius: 13px; background: linear-gradient(90deg, #e5855c 0%, #e07a58 35%, #de6a5a 55%, #d65a58 62%, #b8645c 75%, #8a6a6a 80%, #cb6a5a 90%, #d66e5c 100%); }
.dock-apps { display: flex; gap: 9.400px; }
.app { position: relative; width: 32px; height: 32px; }
.app svg { display: block; overflow: visible; }
.run::after { content: ""; position: absolute; left: 14px; top: 38px; width: 4px; height: 4px; background: #5a0a0a; border-radius: 50%; }
.badge { position: absolute; right: -6px; top: -4px; width: 15px; height: 15px; background: #c33a30; border-radius: 50%; color: #eed; font: 9px/15px "Roboto", sans-serif; text-align: center; }
.cal-month { fill: #f0dcd8; font: 700 6px "Roboto", sans-serif; text-anchor: middle; }
.cal-day { fill: #2c2c2c; font: 17px "Roboto", sans-serif; text-anchor: middle; }
.dock-sep { flex: none; width: 1px; height: 38px; margin: -1px 0 0 14px; background: #5a3a34; }
.dock-files { display: flex; align-items: flex-end; height: 36px; margin-top: -2px; }
.dock-files svg { flex: none; display: block; }
.doc-pdf { margin-left: 17px; }
.pdf-label { fill: #7a7573; font: 7px "Roboto", sans-serif; text-anchor: middle; }
.thumb { margin: 0 5px 1px 32px; }
.shot { margin-bottom: 1px; }
.trash { margin-left: 9px; }

/* base */
.base { position: relative; flex: none; width: 2016px; height: 36px; }
.deck { display: flex; height: 12px; justify-content: center; background: linear-gradient(90deg, #2a2c2e 0, #6a7074 30px, #c7d0d6 60px, #70767a 100px, #1e2022 125px, #3a3d40 170px, #7b8186 235px, #a1a8af 270px, #a1a8af 1746px, #7b8186 1781px, #3a3d40 1846px, #1e2022 1891px, #70767a 1916px, #c7d0d6 1956px, #6a7074 1986px, #2a2c2e 2016px); border-radius: 6px 6px 0 0; }
.notch { width: 298px; height: 12px; background: linear-gradient(90deg, #3f4144 0%, #7d8287 22%, #a1a8af 32%, #a1a8af 68%, #7d8287 78%, #3f4144 100%); border-radius: 0 0 6px 6px; }
.foot { height: 24px; background: linear-gradient(#7a7f85 0%, #54585c 35%, #2a2c2e 70%, #0e0f10 100%); border-radius: 0 0 190px 190px / 0 0 24px 24px; }
```
